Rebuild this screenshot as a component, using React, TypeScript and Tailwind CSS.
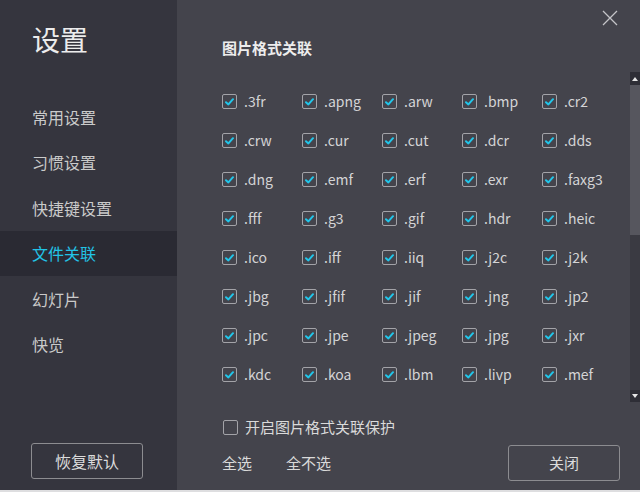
import React from 'react';

const FONT = '"Noto Sans CJK SC", "Noto Sans", sans-serif';

const menu = ['常用设置', '习惯设置', '快捷键设置', '文件关联', '幻灯片', '快览'];

// only the rows that fit in the visible scroll area
const formats = [
  '.3fr', '.apng', '.arw', '.bmp', '.cr2',
  '.crw', '.cur', '.cut', '.dcr', '.dds',
  '.dng', '.emf', '.erf', '.exr', '.faxg3',
  '.fff', '.g3', '.gif', '.hdr', '.heic',
  '.ico', '.iff', '.iiq', '.j2c', '.j2k',
  '.jbg', '.jfif', '.jif', '.jng', '.jp2',
  '.jpc', '.jpe', '.jpeg', '.jpg', '.jxr',
  '.kdc', '.koa', '.lbm', '.livp', '.mef',
];

const CheckBox = ({ checked }: { checked: boolean }) => (
  <span className="w-[15px] h-[15px] shrink-0 rounded-[2px] border-[1.5px] border-[#a3a3a8] flex items-center justify-center">
    {checked && (
      <svg width="9" height="8" viewBox="0 0 9 8">
        <path d="M1 4.2 L3.4 6.4 L8 1.2" fill="none" stroke="#21c6ea" strokeWidth="2" strokeLinecap="round" strokeLinejoin="round" />
      </svg>
    )}
  </span>
);

export default function App() {
  return (
    <div className="w-[640px] h-[492px] flex flex-col overflow-hidden" style={{ fontFamily: FONT }}>
      <div className="h-[490px] flex">
        {/* sidebar */}
        <div className="w-[177px] shrink-0 bg-[#35353e] flex flex-col">
          <div className="pl-[32px] pt-[22px] text-[28px] leading-[34px] text-[#ececec]">设置</div>
          <div className="mt-[38px] flex flex-col">
            {menu.map((m) => {
              const active = m === '文件关联';
              return (
                <div
                  key={m}
                  className={
                    active
                      ? 'h-[45.5px] pl-[32px] flex items-center text-[16px] text-[#22c3e6] bg-[#2a2a33]'
                      : 'h-[45.5px] pl-[32px] flex items-center text-[16px] text-[#cacaca]'
                  }
                >
                  {m}
                </div>
              );
            })}
          </div>
          <div className="mt-auto mb-[11px] ml-[31px] w-[112px] h-[36px] border border-[#8c8c90] rounded-[3px] flex items-center justify-center text-[16px] text-[#dcdcdc]">
            恢复默认
          </div>
        </div>

        {/* main */}
        <div className="relative flex-1 bg-[#44444c] flex flex-col">
          <svg className="absolute left-[425px] top-[10px]" width="16" height="16" viewBox="0 0 16 16">
            <path d="M1 1 L15 15 M15 1 L1 15" stroke="#c4c4c8" strokeWidth="1.3" />
          </svg>

          <div className="pl-[45px] pt-[38px] text-[15px] leading-[20px] font-bold text-[#ededed]">图片格式关联</div>

          <div className="mt-[14px] h-[330px] flex">
            <div className="flex-1 overflow-hidden pl-[45px] pt-[10px]">
              <div className="grid grid-cols-[repeat(5,80px)] auto-rows-[39px]">
                {formats.map((f) => (
                  <div key={f} className="flex items-center gap-[7px]">
                    <CheckBox checked />
                    <span className="text-[14px] text-[#d4d4d6]">{f}</span>
                  </div>
                ))}
              </div>
            </div>
            <div className="w-[10px] flex flex-col bg-[#3a3a42]">
              <div className="h-[13px] bg-[#2e2e36] flex items-center justify-center">
                <svg width="6" height="4" viewBox="0 0 6 4"><path d="M0 4 L3 0 L6 4 Z" fill="#e6e6e6" /></svg>
              </div>
              <div className="h-[150px] bg-[#56565e]" />
              <div className="flex-1" />
              <div className="h-[12px] bg-[#2e2e36] flex items-center justify-center">
                <svg width="6" height="4" viewBox="0 0 6 4"><path d="M0 0 L6 0 L3 4 Z" fill="#e6e6e6" /></svg>
              </div>
            </div>
          </div>

          <div className="mt-[15px] pl-[46px] h-[20px] flex items-center gap-[7px]">
            <CheckBox checked={false} />
            <span className="text-[15px] text-[#dadada]">开启图片格式关联保护</span>
          </div>

          <div className="mt-[8px] pl-[45px] pr-[20px] flex items-center">
            <span className="text-[15px] text-[#dadada]">全选</span>
            <span className="ml-[34px] text-[15px] text-[#dadada]">全不选</span>
            <div className="ml-auto w-[112px] h-[36px] border border-[#8c8c90] rounded-[3px] flex items-center justify-center text-[15px] text-[#dcdcdc]">
              关闭
            </div>
          </div>
        </div>
      </div>
      <div className="h-[2px] bg-[#dedee0]" />
    </div>
  );
}
